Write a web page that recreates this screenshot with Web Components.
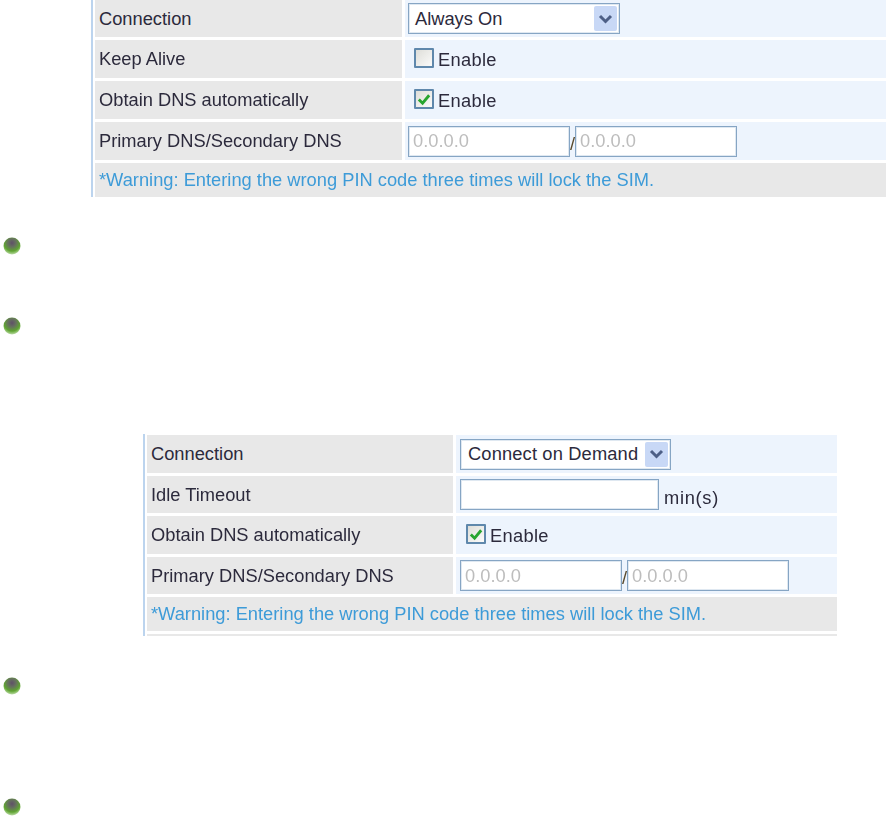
<!DOCTYPE html>
<html>
<head>
<meta charset="utf-8">
<title>3G connection settings</title>
<style>
  html, body { margin: 0; background: #fff; }
  body { width: 886px; height: 819px; overflow: hidden; font-family: "Liberation Sans", Arial, sans-serif; font-size: 18.3px; color: #2c2a3c; }
  .page { display: flex; flex-direction: column; align-items: flex-start; filter: blur(0.35px); }
</style>
</head>
<body>
<div class="page">
  <config-table style="margin-left:91px;width:795px;--label-w:307px">
    <config-row label="Connection" style="height:37px">
      <select-box style="width:212px;margin-left:3px">Always On</select-box>
    </config-row>
    <config-row label="Keep Alive" style="height:38px">
      <check-field>Enable</check-field>
    </config-row>
    <config-row label="Obtain DNS automatically" style="height:38px">
      <check-field checked>Enable</check-field>
    </config-row>
    <config-row label="Primary DNS/Secondary DNS" style="height:38px">
      <dns-pair></dns-pair>
    </config-row>
    <config-note style="height:34px">*Warning: Entering the wrong PIN code three times will lock the SIM.</config-note>
  </config-table>

  <bullet-dot style="margin-top:40px"></bullet-dot>
  <bullet-dot style="margin-top:62px"></bullet-dot>

  <config-table style="margin-top:99px;margin-left:143px;width:694px;--label-w:306px">
    <config-row label="Connection" style="height:38px;margin-top:1px">
      <select-box style="width:211px;margin-left:4px;--text-gap:5px;letter-spacing:.15px">Connect on Demand</select-box>
    </config-row>
    <config-row label="Idle Timeout" style="height:37px">
      <text-box style="width:199px;margin-left:4px"></text-box>
      <span style="margin:6px 0 0 5px;letter-spacing:.7px">min(s)</span>
    </config-row>
    <config-row label="Obtain DNS automatically" style="height:38px">
      <check-field checked style="margin-left:10px">Enable</check-field>
    </config-row>
    <config-row label="Primary DNS/Secondary DNS" style="height:37px">
      <dns-pair style="margin-left:4px"></dns-pair>
    </config-row>
    <config-note style="height:34px">*Warning: Entering the wrong PIN code three times will lock the SIM.</config-note>
    <config-note style="height:2px"></config-note>
  </config-table>

  <bullet-dot style="margin-top:41px"></bullet-dot>
  <bullet-dot style="margin-top:103px"></bullet-dot>
</div>

<script>
  function shadow(el, html) {
    el.attachShadow({ mode: "open" }).innerHTML = html;
  }

  class ConfigTable extends HTMLElement {
    constructor() {
      super();
      shadow(this, `
        <style>
          :host { display: block; box-sizing: border-box; border-left: 2px solid #bcd4ee; padding-left: 2px; }
          .rows { display: flex; flex-direction: column; gap: 3px; }
        </style>
        <div class="rows"><slot></slot></div>`);
    }
  }

  class ConfigRow extends HTMLElement {
    constructor() {
      super();
      shadow(this, `
        <style>
          :host { display: grid; grid-template-columns: var(--label-w) 1fr; column-gap: 3px; }
          .label { background: #e8e8e8; padding-left: 4px; display: flex; align-items: center; }
          .value { background: #edf4fd; display: flex; align-items: center; }
        </style>
        <div class="label"></div>
        <div class="value"><slot></slot></div>`);
      this.shadowRoot.querySelector(".label").textContent = this.getAttribute("label");
    }
  }

  class ConfigNote extends HTMLElement {
    constructor() {
      super();
      shadow(this, `
        <style>
          :host { display: flex; align-items: center; background: #e8e8e8; padding-left: 4px; color: #3d9bd8; }
        </style>
        <slot></slot>`);
    }
  }

  class SelectBox extends HTMLElement {
    constructor() {
      super();
      shadow(this, `
        <style>
          :host { display: flex; box-sizing: border-box; height: 31px; background: #fff; border: 1px solid #86a5c4; box-shadow: inset 0 0 0 1px #dfe8f1; padding: 2px; justify-content: space-between; align-items: center; }
          .text { padding-left: var(--text-gap, 4px); white-space: nowrap; }
          .arrow { width: 23px; height: 25px; background: #c8d8f6; border-radius: 2px; display: flex; align-items: center; justify-content: center; }
        </style>
        <span class="text"><slot></slot></span>
        <span class="arrow">
          <svg width="15" height="10" viewBox="0 0 15 10"><path d="M2 2 L7.5 7.5 L13 2" fill="none" stroke="#4d5f86" stroke-width="3"/></svg>
        </span>`);
    }
  }

  class TextBox extends HTMLElement {
    constructor() {
      super();
      shadow(this, `
        <style>
          :host { display: flex; align-items: center; box-sizing: border-box; height: 31px; background: #fff; border: 1px solid #86a5c4; box-shadow: inset 0 0 0 1px #dfe8f1; padding-left: 4px; color: #bdbdbd; }
        </style>
        <slot></slot>`);
    }
  }

  class DnsPair extends HTMLElement {
    constructor() {
      super();
      shadow(this, `
        <style>
          :host { display: flex; align-items: center; margin-left: 3px; }
          text-box { width: 162px; }
          .sep { width: 5px; margin-top: 5px; color: #5a4a2c; }
        </style>
        <text-box>0.0.0.0</text-box><span class="sep">/</span><text-box>0.0.0.0</text-box>`);
    }
  }

  class CheckField extends HTMLElement {
    constructor() {
      super();
      const tick = this.hasAttribute("checked")
        ? `<svg width="17" height="17" viewBox="0 0 17 17"><path d="M3 8.5 L7 12.5 L14 4" fill="none" stroke="#27a52f" stroke-width="3"/></svg>`
        : "";
      shadow(this, `
        <style>
          :host { display: flex; align-items: center; margin-left: 9px; }
          .box { box-sizing: border-box; width: 20px; height: 20px; border: 2px solid #5f88ac; border-radius: 1px; background: linear-gradient(135deg, #deded9, #fbfbfa); margin-top: -2px; display: flex; align-items: center; justify-content: center; }
          .text { margin: 2px 0 0 4px; letter-spacing: .3px; }
        </style>
        <span class="box">${tick}</span>
        <span class="text"><slot></slot></span>`);
    }
  }

  class BulletDot extends HTMLElement {
    constructor() {
      super();
      shadow(this, `
        <style>
          :host { display: block; width: 18px; height: 18px; margin-left: 3px; }
          svg { display: block; }
        </style>
        <svg width="18" height="18" viewBox="0 0 18 18">
          <defs>
            <radialGradient id="g" cx="50%" cy="32%" r="68%">
              <stop offset="0" stop-color="#5f5068"/>
              <stop offset="0.35" stop-color="#66725e"/>
              <stop offset="0.7" stop-color="#5fa431"/>
              <stop offset="1" stop-color="#bcdca6"/>
            </radialGradient>
          </defs>
          <circle cx="9" cy="9" r="8.5" fill="url(#g)"/>
        </svg>`);
    }
  }

  customElements.define("config-table", ConfigTable);
  customElements.define("config-row", ConfigRow);
  customElements.define("config-note", ConfigNote);
  customElements.define("select-box", SelectBox);
  customElements.define("text-box", TextBox);
  customElements.define("dns-pair", DnsPair);
  customElements.define("check-field", CheckField);
  customElements.define("bullet-dot", BulletDot);
</script>
</body>
</html>
